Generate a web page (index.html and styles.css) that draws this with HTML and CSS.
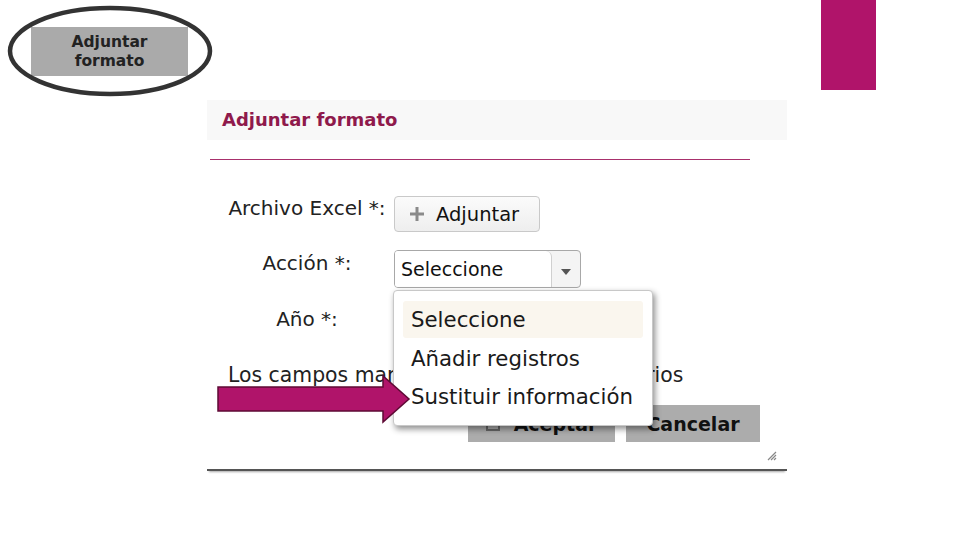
FILE: index.html
```html
<!DOCTYPE html>
<html lang="es">
<head>
<meta charset="utf-8">
<title>Adjuntar formato</title>
<link rel="stylesheet" href="styles.css">
</head>
<body>
<div class="slide">
  <div class="callout">
    <svg class="callout-ring" width="206" height="92" viewBox="0 0 206 92"><ellipse cx="103" cy="46" rx="100" ry="43" fill="none" stroke="#333" stroke-width="4.5"/></svg>
    <div class="callout-btn">Adjuntar<br>formato</div>
  </div>
  <div class="brand-bar"></div>

  <div class="dialog">
    <div class="dialog-head"><h1 class="dialog-title">Adjuntar formato</h1></div>
    <div class="dialog-rule"></div>
    <div class="form">
      <div class="label">Archivo Excel *:</div>
      <div class="control">
        <button class="btn-attach"><svg width="14" height="14" viewBox="0 0 14 14"><path d="M5.5 0h3v5.5H14v3H8.5V14h-3V8.5H0v-3h5.5z" fill="#8a8a8a"/></svg><span>Adjuntar</span></button>
      </div>

      <div class="label label-sel">Acción *:</div>
      <div class="control">
        <div class="select">
          <span class="select-text">Seleccione</span>
          <span class="select-arrow"><svg width="10" height="6" viewBox="0 0 10 6"><path d="M0 0h10L5 6z" fill="#555"/></svg></span>
          <ul class="menu">
            <li class="menu-item is-hover">Seleccione</li>
            <li class="menu-item">Añadir registros</li>
            <li class="menu-item">Sustituir información</li>
          </ul>
        </div>
      </div>

      <div class="label label-sel">Año *:</div>
      <div class="control">
        <div class="select">
          <span class="select-text">Seleccione</span>
          <span class="select-arrow"></span>
        </div>
      </div>

      <div class="note">Los campos marcados con * son obligatorios</div>
    </div>
    <div class="actions">
      <button class="btn-grey"><svg width="14" height="14" viewBox="0 0 14 14"><rect x="1" y="1" width="12" height="12" fill="none" stroke="#666" stroke-width="2"/></svg><span>Aceptar</span></button>
      <button class="btn-grey btn-cancel">Cancelar</button>
    </div>
    <svg class="grip" width="10" height="10" viewBox="0 0 10 10"><path d="M9 1L1 9M9 4L4 9M9 7L7 9" stroke="#888" stroke-width="1.2"/></svg>
  </div>

  <svg class="pointer" width="196" height="52" viewBox="0 0 196 52"><path d="M1 13H166V2L192 25L166 48V37H1Z" fill="#b0146a" stroke="#5e0a35" stroke-width="1.5" stroke-linejoin="miter"/></svg>
</div>
</body>
</html>
```
FILE: styles.css
```css
* { box-sizing: border-box; }
html, body { margin: 0; padding: 0; background: #fff; }
body { font-family: "DejaVu Sans", Verdana, sans-serif; color: #222; }

.slide {
  position: relative;
  width: 960px;
  height: 540px;
  overflow: hidden;
  padding: 100px 0 0 207px;
}

.callout {
  position: absolute;
  left: 7px;
  top: 5px;
  width: 206px;
  height: 92px;
  display: flex;
  align-items: center;
  justify-content: center;
}
.callout-ring { position: absolute; left: 0; top: 0; }
.callout-btn {
  width: 157px;
  height: 49px;
  background: #aaaaaa;
  font-weight: bold;
  font-size: 15.5px;
  line-height: 19px;
  color: #222;
  text-align: center;
  display: flex;
  align-items: center;
  justify-content: center;
  padding-top: 2px;
  margin-left: -1px;
}

.brand-bar {
  position: absolute;
  left: 821px;
  top: 0;
  width: 55px;
  height: 90px;
  background: #b0146a;
}

.dialog {
  position: relative;
  width: 580px;
  background: #fff;
  border-bottom: 2px solid #555;
  box-shadow: 0 3px 2px -2px rgba(0,0,0,0.35);
  padding-bottom: 27px;
}
.dialog-head {
  height: 40px;
  background: #f8f8f8;
  display: flex;
  align-items: center;
  padding-left: 15px;
}
.dialog-title {
  margin: 0;
  font-size: 18px;
  font-weight: bold;
  color: #8f1a4c;
  line-height: 22px;
}
.dialog-rule {
  margin: 19px 37px 0 3px;
  height: 1px;
  background: #a8306c;
}

.form {
  margin-top: 36px;
  padding-left: 21px;
  display: grid;
  grid-template-columns: 158px auto;
  column-gap: 8px;
  row-gap: 18px;
  align-items: start;
  justify-content: start;
}
.label {
  font-size: 20px;
  line-height: 24px;
  text-align: center;
  white-space: nowrap;
}
.label-sel { padding-top: 1px; }
.control { display: flex; }

.btn-attach {
  height: 36px;
  width: 146px;
  display: flex;
  align-items: center;
  gap: 12px;
  padding: 0 0 0 15px;
  border: 1px solid #c9c9c9;
  border-radius: 4px;
  background: linear-gradient(#fbfbfb, #eeeeee);
  font-family: inherit;
  font-size: 19.5px;
  color: #111;
}

.select {
  position: relative;
  width: 187px;
  height: 38px;
  border: 1px solid #a8a8a8;
  border-radius: 4px;
  display: flex;
  background: #f4f4f4;
}
.select-text {
  flex: 1;
  background: #fff;
  border-right: 1px solid #d0d0d0;
  border-radius: 3px 6px 0 3px;
  font-size: 19px;
  line-height: 36px;
  padding-left: 6px;
  color: #111;
}
.select-arrow {
  width: 28px;
  display: flex;
  align-items: center;
  justify-content: center;
  padding-top: 6px;
}

.menu {
  position: absolute;
  left: -2px;
  top: 39px;
  width: 260px;
  margin: 0;
  padding: 10px 0 9px;
  list-style: none;
  background: #fff;
  border: 1px solid #c8c8c8;
  border-radius: 4px;
  box-shadow: 2px 3px 6px rgba(0,0,0,0.45);
  z-index: 2;
}
.menu-item {
  margin: 0 9px;
  height: 38px;
  line-height: 38px;
  padding-left: 8px;
  font-size: 21.3px;
  color: #1a1a1a;
  white-space: nowrap;
  border-radius: 3px;
}
.menu-item.is-hover { background: #faf6ee; height: 37px; line-height: 37px; margin-bottom: 2px; }

.note {
  grid-column: 1 / -1;
  font-size: 20.4px;
  line-height: 24px;
  white-space: nowrap;
  margin-top: 1px;
}

.actions {
  display: flex;
  justify-content: flex-end;
  gap: 11px;
  padding-right: 27px;
  margin-top: 18px;
}
.btn-grey {
  height: 37px;
  width: 147px;
  border: 0;
  background: #acacac;
  font-family: inherit;
  font-weight: bold;
  font-size: 19px;
  color: #111;
  display: flex;
  align-items: center;
  justify-content: center;
  gap: 14px;
  padding: 0;
}
.btn-cancel { width: 134px; }

.grip { position: absolute; right: 10px; bottom: 8px; }

.pointer {
  position: absolute;
  left: 217px;
  top: 374px;
  z-index: 3;
}
```
